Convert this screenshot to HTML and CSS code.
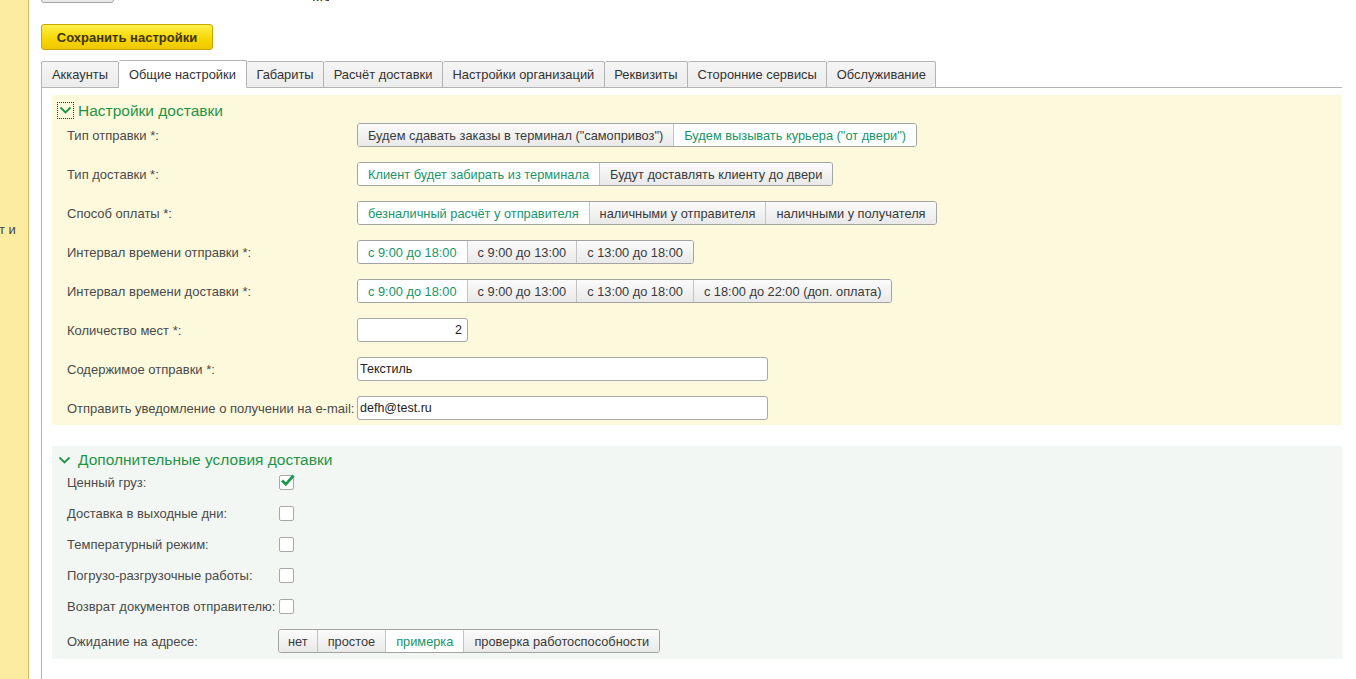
FILE: index.html
```html
<!DOCTYPE html>
<html lang="ru">
<head>
<meta charset="utf-8">
<title>Настройки</title>
<link rel="stylesheet" href="styles.css">
</head>
<body>
<div class="layout">
  <aside class="sidebar"><span class="side-text">т и</span></aside>
  <main class="main">
    <div class="topbar">
      <span class="top-btn"></span>
      <span class="top-title">Настройки модуля доставки</span>
    </div>
    <button class="save-btn">Сохранить настройки</button>
    <div class="tabs">
      <span class="tab">Аккаунты</span>
      <span class="tab active">Общие настройки</span>
      <span class="tab">Габариты</span>
      <span class="tab">Расчёт доставки</span>
      <span class="tab">Настройки организаций</span>
      <span class="tab">Реквизиты</span>
      <span class="tab">Сторонние сервисы</span>
      <span class="tab">Обслуживание</span>
      <span class="tab-fill"></span>
    </div>
    <div class="panel">
      <section class="group group-yellow">
        <div class="group-head">
          <span class="toggle-box"><svg width="13" height="9" viewBox="0 0 13 9"><path d="M1.5 1.5 L6.5 6.5 L11.5 1.5" fill="none" stroke="#1f9447" stroke-width="1.8"/></svg></span>
          <span class="group-title">Настройки доставки</span>
        </div>
        <div class="rows rows-1">
          <div class="row"><span class="label">Тип отправки *:</span>
            <div class="seg"><span class="sb">Будем сдавать заказы в терминал ("самопривоз")</span><span class="sb on">Будем вызывать курьера ("от двери")</span></div></div>
          <div class="row"><span class="label">Тип доставки *:</span>
            <div class="seg"><span class="sb on">Клиент будет забирать из терминала</span><span class="sb">Будут доставлять клиенту до двери</span></div></div>
          <div class="row"><span class="label">Способ оплаты *:</span>
            <div class="seg"><span class="sb on">безналичный расчёт у отправителя</span><span class="sb">наличными у отправителя</span><span class="sb">наличными у получателя</span></div></div>
          <div class="row"><span class="label">Интервал времени отправки *:</span>
            <div class="seg"><span class="sb on">с 9:00 до 18:00</span><span class="sb">с 9:00 до 13:00</span><span class="sb">с 13:00 до 18:00</span></div></div>
          <div class="row"><span class="label">Интервал времени доставки *:</span>
            <div class="seg"><span class="sb on">с 9:00 до 18:00</span><span class="sb">с 9:00 до 13:00</span><span class="sb">с 13:00 до 18:00</span><span class="sb">с 18:00 до 22:00 (доп. оплата)</span></div></div>
          <div class="row"><span class="label">Количество мест *:</span>
            <span class="field field-num">2</span></div>
          <div class="row"><span class="label">Содержимое отправки *:</span>
            <span class="field field-wide">Текстиль</span></div>
          <div class="row"><span class="label">Отправить уведомление о получении на e-mail:</span>
            <span class="field field-wide">defh@test.ru</span></div>
        </div>
      </section>
      <section class="group group-green">
        <div class="group-head head-2">
          <svg class="chev" width="13" height="9" viewBox="0 0 13 9"><path d="M1.5 1.5 L6.5 6.5 L11.5 1.5" fill="none" stroke="#1f9447" stroke-width="1.8"/></svg>
          <span class="group-title">Дополнительные условия доставки</span>
        </div>
        <div class="rows rows-2">
          <div class="crow"><span class="label label-2">Ценный груз:</span><span class="cb"><svg width="15" height="13" viewBox="0 0 15 13"><path d="M2 6.5 L5.8 10.3 L13.5 1.5" fill="none" stroke="#1b9a4b" stroke-width="2.8"/></svg></span></div>
          <div class="crow"><span class="label label-2">Доставка в выходные дни:</span><span class="cb"></span></div>
          <div class="crow"><span class="label label-2">Температурный режим:</span><span class="cb"></span></div>
          <div class="crow"><span class="label label-2">Погрузо-разгрузочные работы:</span><span class="cb"></span></div>
          <div class="crow"><span class="label label-2">Возврат документов отправителю:</span><span class="cb"></span></div>
          <div class="row"><span class="label label-2b">Ожидание на адресе:</span>
            <div class="seg"><span class="sb sb-s">нет</span><span class="sb sb-s">простое</span><span class="sb sb-s on">примерка</span><span class="sb sb-s">проверка работоспособности</span></div></div>
        </div>
      </section>
    </div>
  </main>
</div>
</body>
</html>
```
FILE: styles.css
```css
* { box-sizing: border-box; }
html, body { margin: 0; padding: 0; }
body {
  font-family: "Liberation Sans", Arial, sans-serif;
  font-size: 13px;
  color: #333;
  background: #fff;
  overflow: hidden;
}
.layout { display: flex; height: 679px; }
.sidebar {
  width: 29px;
  flex: none;
  background: #fcec9f;
  border-right: 1px solid #cdbb62;
  position: relative;
}
.side-text {
  position: absolute;
  left: -1px;
  top: 222px;
  font-size: 13px;
  color: #444;
  white-space: nowrap;
}
.main {
  flex: 1;
  padding: 0 14px 0 12px;
  display: flex;
  flex-direction: column;
}
.topbar {
  height: 4px;
  overflow: hidden;
  display: flex;
  align-items: flex-end;
}
.top-btn {
  flex: none;
  width: 73px;
  height: 24px;
  border: 1px solid #a5a5a5;
  border-radius: 3px;
  background: linear-gradient(#fdfdfd, #e8e8e8);
  margin-bottom: 1px;
}
.top-title {
  margin-left: 195px;
  font-size: 16px;
  line-height: 14px;
  color: #333;
  transform: translateY(-1px);
  white-space: nowrap;
  width: 20px;
  overflow: hidden;
  text-indent: -80px;
}
.save-btn {
  align-self: flex-start;
  margin-top: 20px;
  height: 26px;
  width: 172px;
  padding: 0;
  font-family: "Liberation Sans", Arial, sans-serif;
  font-size: 13px;
  font-weight: bold;
  color: #3b3300;
  background: linear-gradient(#fff04a, #f7d600 60%, #efc800);
  border: 1px solid #c9a600;
  border-radius: 3px;
}
.tabs {
  margin-top: 10px;
  display: flex;
  align-items: flex-end;
  height: 28px;
}
.tab {
  height: 27px;
  padding: 0 9.5px;
  display: flex;
  align-items: center;
  font-size: 12.9px;
  color: #333;
  background: linear-gradient(#f5f5f5, #ececec);
  border: 1px solid #b4b4b4;
  border-left: none;
  border-radius: 2px 2px 0 0;
  white-space: nowrap;
}
.tab:first-child { border-left: 1px solid #b4b4b4; padding: 0 10px; }
.tab.active {
  height: 28px;
  background: #fff;
  border-bottom-color: #fff;
  padding: 0 10px;
}
.tab-fill {
  flex: 1;
  height: 1px;
  background: #b4b4b4;
}
.panel {
  flex: 1;
  border-left: 1px solid #b4b4b4;
  padding: 7px 0 0 10px;
  display: flex;
  flex-direction: column;
  gap: 21px;
}
.group { padding: 0 0 5px 5px; }
.group-yellow { background: #fdf9dc; padding-top: 7px; }
.group-green { background: #f2f7f3; padding-top: 5px; padding-bottom: 6px; }
.group-head {
  display: flex;
  align-items: center;
  height: 17px;
  gap: 4px;
}
.toggle-box {
  width: 17px;
  height: 17px;
  border: 1px dotted #333;
  display: flex;
  align-items: center;
  justify-content: center;
}
.chev { margin: 0 4px 0 1px; }
.head-2 { height: 18px; gap: 3px; }
.group-title {
  font-size: 15.5px;
  color: #1f9447;
  white-space: nowrap;
}
.rows { display: flex; flex-direction: column; }
.rows-1 { gap: 15px; margin-top: 4px; }
.row { display: flex; align-items: center; height: 24px; }
.label {
  flex: none;
  width: 300px;
  padding-left: 10px;
  color: #4a4a4a;
  white-space: nowrap;
}
.seg {
  display: flex;
  height: 24px;
  border: 1px solid #a3a3a3;
  border-radius: 3px;
  overflow: hidden;
}
.sb {
  display: flex;
  align-items: center;
  padding: 0 10px;
  background: linear-gradient(#fbfbfb, #e9e9e9);
  color: #3a3a3a;
  border-left: 1px solid #c4c4c4;
  font-size: 12.8px;
  white-space: nowrap;
}
.sb:first-child { border-left: none; }
.sb.on { background: #fff; color: #17956a; }
.sb-s:first-child { padding: 0 9px; }
.field {
  height: 24px;
  border: 1px solid #a9a9a9;
  border-radius: 3px;
  background: #fff;
  display: flex;
  align-items: center;
  padding: 0 2px;
  font-size: 12.5px;
  color: #222;
}
.field-num { width: 111px; justify-content: flex-end; padding-right: 5px; }
.field-wide { width: 411px; }
.rows-2 { margin-top: 5px; gap: 15px; }
.crow { display: flex; align-items: center; height: 16px; }
.label-2 { width: 222px; }
.label-2b { width: 221px; }
.cb {
  width: 15px;
  height: 15px;
  border: 1px solid #a8a8a8;
  border-radius: 2px;
  background: #fff;
  position: relative;
}
.cb svg { position: absolute; left: 0px; top: -2px; }
```
